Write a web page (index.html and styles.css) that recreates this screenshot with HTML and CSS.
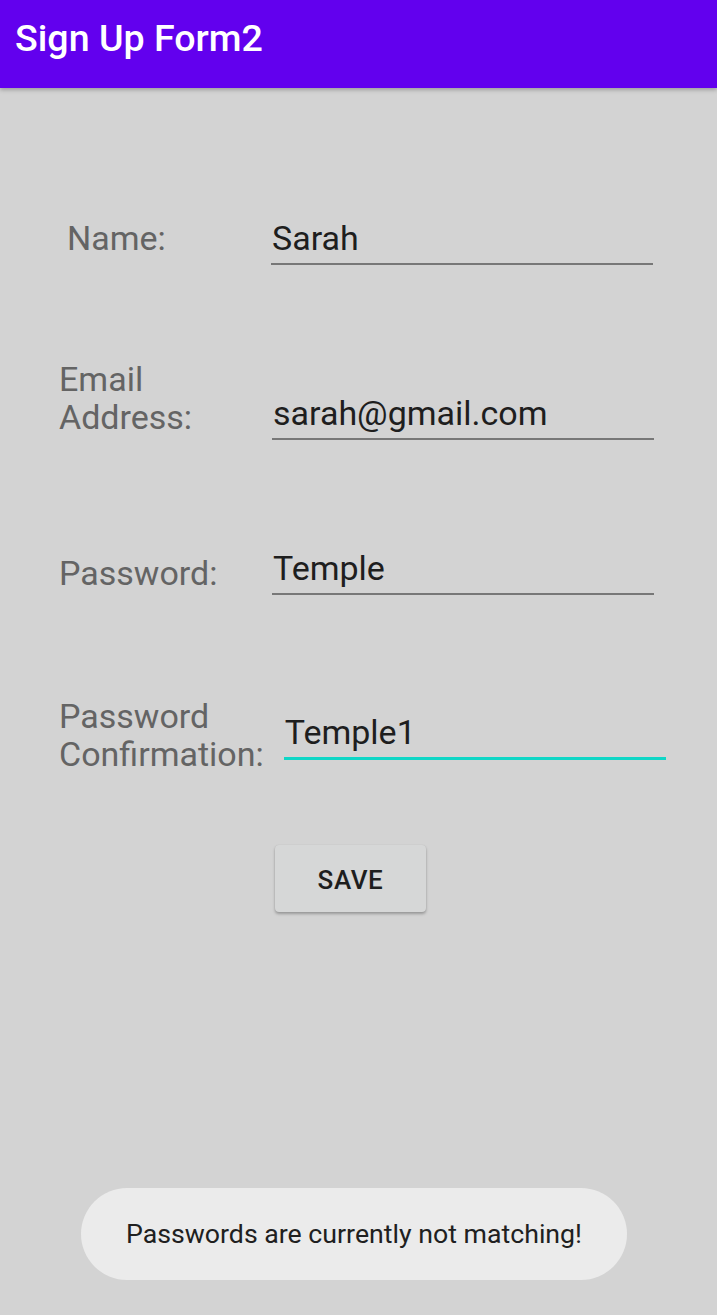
FILE: index.html
```html
<!DOCTYPE html>
<html>
<head>
<meta charset="utf-8">
<title>Sign Up Form2</title>
<link rel="stylesheet" href="styles.css">
</head>
<body>
<header class="appbar">
  <h1 class="appbar-title">Sign Up Form2</h1>
</header>
<main class="form">
  <div class="row row-name">
    <div class="label label-name">Name:</div>
    <div class="field">Sarah</div>
  </div>
  <div class="row row-email">
    <div class="label">Email<br>Address:</div>
    <div class="field">sarah@gmail.com</div>
  </div>
  <div class="row row-pass">
    <div class="label">Password:</div>
    <div class="field">Temple</div>
  </div>
  <div class="row row-confirm">
    <div class="label label-auto">Password<br>Confirmation:</div>
    <div class="field field-focused">Temple1</div>
  </div>
  <div class="actions">
    <button class="btn-save">SAVE</button>
  </div>
</main>
<div class="toast">Passwords are currently not matching!</div>
</body>
</html>
```

FILE: styles.css
```css
html, body {
  margin: 0;
  padding: 0;
}
body {
  background: #d3d3d3;
  font-family: Roboto, "Noto Sans", sans-serif;
  width: 717px;
  height: 1315px;
  position: relative;
  overflow: hidden;
}
.appbar {
  height: 88px;
  background: #6200ee;
  box-shadow: 0 2px 4px rgba(0,0,0,0.25);
  display: flex;
  align-items: flex-start;
  padding-left: 15px;
}
.appbar-title {
  margin: 0;
  margin-top: 15px;
  color: #ffffff;
  font-weight: 500;
  font-size: 37.6px;
  line-height: 46px;
}
.form {
  display: flex;
  flex-direction: column;
  padding-left: 59px;
}
.row {
  display: flex;
}
.row-name {
  margin-top: 131px;
  align-items: flex-end;
}
.row-email {
  margin-top: 95px;
  align-items: flex-end;
}
.row-pass {
  margin-top: 109px;
  align-items: flex-end;
}
.row-confirm {
  margin-top: 102px;
  align-items: center;
}
.label {
  width: 213px;
  flex: none;
  color: #646464;
  font-size: 34px;
  line-height: 38px;
  margin-bottom: 8px;
}
.label-name {
  margin-left: 8px;
  width: 204px;
}
.row-email .label {
  margin-bottom: 4px;
}
.row-pass .label {
  margin-bottom: 3px;
}
.label-auto {
  width: auto;
  margin-right: 20px;
  margin-bottom: 0;
}
.field {
  width: 382px;
  color: #1e1e1e;
  font-size: 34px;
  line-height: 38px;
  padding-bottom: 6px;
  border-bottom: 2px solid #777777;
  padding-left: 1px;
  box-sizing: border-box;
}
.field-focused {
  border-bottom: 3px solid #0fd6c6;
  margin-top: 2px;
}
.actions {
  display: flex;
  padding-left: 216px;
  margin-top: 72px;
}
.btn-save {
  width: 151px;
  height: 67px;
  background: #d6d7d7;
  border: none;
  border-radius: 4px;
  box-shadow: 0 2px 3px rgba(0,0,0,0.28), 0 0 1px rgba(0,0,0,0.12);
  color: #1e1e1e;
  font-family: Roboto, "Noto Sans", sans-serif;
  font-weight: 500;
  font-size: 26px;
  letter-spacing: 0.6px;
  padding: 0;
  padding-top: 3px;
}
.toast {
  position: absolute;
  left: 81px;
  top: 1188px;
  width: 546px;
  height: 92px;
  border-radius: 46px;
  background: #ebebeb;
  color: #202020;
  font-size: 26.7px;
  display: flex;
  align-items: center;
  justify-content: center;
}
```
